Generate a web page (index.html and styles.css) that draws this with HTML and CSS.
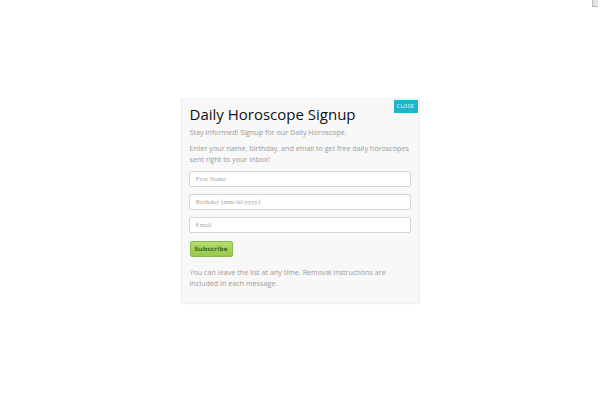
FILE: index.html
```html
<!DOCTYPE html>
<html>
<head>
<meta charset="utf-8">
<link rel="stylesheet" href="styles.css">
</head>
<body>
<div class="corner"></div>
<div class="stage">
  <div class="modal">
    <button class="close">CLOSE</button>
    <h1 class="title">Daily Horoscope Signup</h1>
    <p class="lead">Stay informed! Signup for our Daily Horoscope.</p>
    <p class="text">Enter your name, birthday, and email to get free daily horoscopes sent right to your inbox!</p>
    <form class="form">
      <input class="field" type="text" placeholder="First Name">
      <input class="field" type="text" placeholder="Birthday (mm/dd/yyyy)">
      <input class="field" type="text" placeholder="Email">
      <div class="actions"><button class="subscribe" type="button">Subscribe</button></div>
    </form>
    <p class="note">You can leave the list at any time. Removal instructions are included in each message.</p>
  </div>
</div>
</body>
</html>
```

FILE: styles.css
```css
html, body {
  margin: 0;
  padding: 0;
  background: #ffffff;
  width: 600px;
  height: 400px;
  overflow: hidden;
}
body {
  font-family: "Open Sans", "DejaVu Sans", sans-serif;
  position: relative;
}
.corner {
  position: absolute;
  top: 0;
  right: 2px;
  width: 5px;
  height: 6px;
  background: #e4e4e4;
  border-left: 1px solid #bbb;
  border-bottom: 1px solid #bbb;
}
.stage {
  width: 600px;
  height: 400px;
  display: flex;
  align-items: center;
  justify-content: center;
}
.modal {
  position: relative;
  box-sizing: border-box;
  width: 237px;
  height: 203px;
  padding: 5px 8px 0 8px;
  background: #f8f8f8;
  box-shadow: 0 0 0 1px #efefef, 0 1px 2px rgba(0,0,0,0.12);
}
.close {
  position: absolute;
  top: 1px;
  right: 1px;
  width: 24px;
  height: 13px;
  padding: 0;
  border: none;
  background: #1fb4c9;
  color: #e8fbff;
  font-family: "DejaVu Sans", sans-serif;
  font-size: 5px;
  letter-spacing: 0.2px;
}
.title {
  margin: 0 0 3px 0;
  font-size: 15px;
  font-weight: 400;
  color: #111;
  line-height: 20px;
}
.lead, .text, .note {
  margin: 0;
  font-size: 7.2px;
  line-height: 11px;
  color: #9a9a9a;
}
.lead { margin-bottom: 5px; }
.text { margin-bottom: 6px; }
.form {
  display: flex;
  flex-direction: column;
  gap: 7px;
  margin: 0;
}
.field {
  box-sizing: border-box;
  width: 222px;
  height: 16px;
  margin: 0 0 0 -1px;
  padding: 0 6px;
  border: 1px solid #d6d6d6;
  border-radius: 2px;
  background: #fff;
  font-family: "Liberation Serif", serif;
  font-size: 6.8px;
  color: #555;
}
.field::placeholder { color: #aaa; }
.actions { display: flex; padding-top: 1px; }
.subscribe {
  height: 16px;
  width: 43px;
  padding: 0;
  border: 1px solid #8cba4a;
  border-radius: 2px;
  background: linear-gradient(#b5dd6f, #97c84a);
  color: #4a6d1f;
  font-family: "DejaVu Sans", sans-serif;
  font-weight: bold;
  font-size: 6px;
}
.note { margin-top: 10px; }
```
